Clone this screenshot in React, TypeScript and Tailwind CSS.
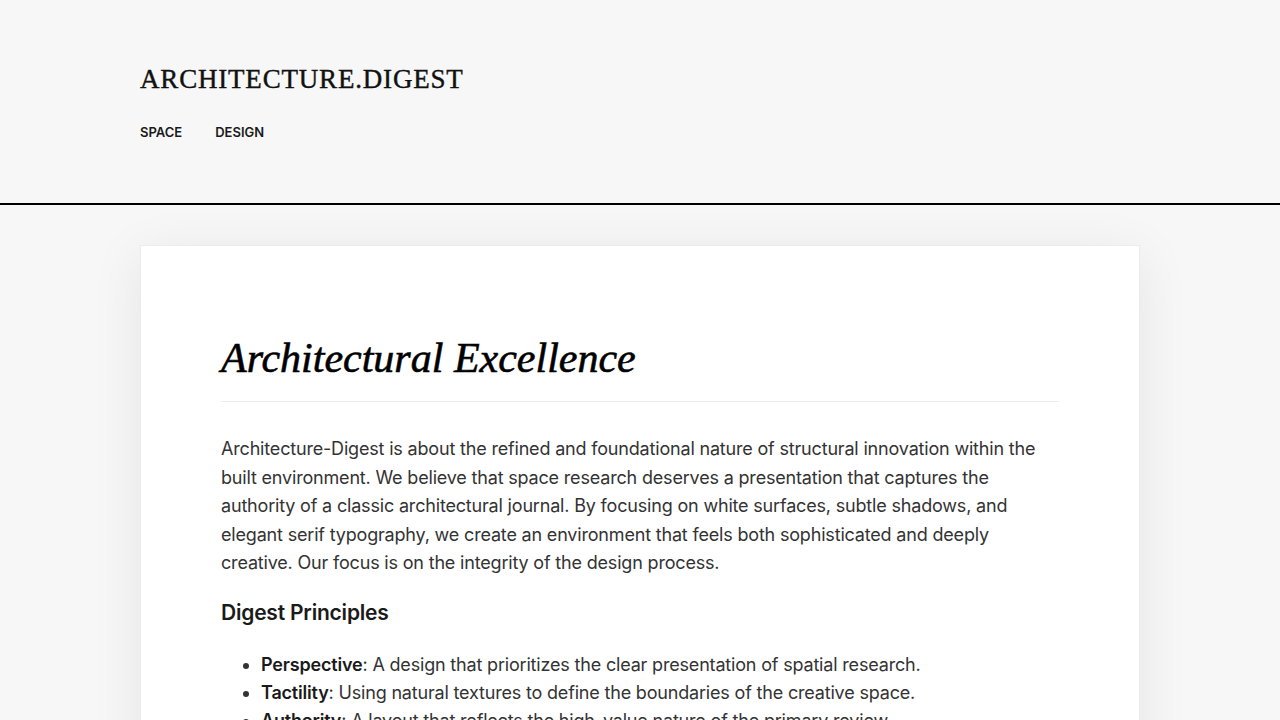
import React from 'react';

// ============================================
// Header
// ============================================

function SiteHeader() {
  const links = ['Space', 'Design'];
  return (
    <header className="bg-[#f7f7f7] border-b-2 border-black">
      <div className="max-w-[1000px] mx-auto pt-[62px] pb-[62px]">
        <div className="text-[27px] leading-[34px] tracking-[0.03em] text-[#111] font-['Liberation_Serif',serif] [-webkit-text-stroke:0.4px_#111]">
          ARCHITECTURE.DIGEST
        </div>
        <nav className="flex items-center gap-[33px] mt-[27px]">
          {links.map((l) => (
            <a key={l} href="#" className="text-[13px] leading-[18px] font-semibold uppercase text-[#1a1a1a]">
              {l}
            </a>
          ))}
        </nav>
      </div>
    </header>
  );
}

// ============================================
// Article
// ============================================

const principles = [
  { term: 'Perspective', text: 'A design that prioritizes the clear presentation of spatial research.' },
  { term: 'Tactility', text: 'Using natural textures to define the boundaries of the creative space.' },
  { term: 'Authority', text: 'A layout that reflects the high-value nature of the primary review.' },
];

export default function App() {
  return (
    <div className="min-h-screen bg-[#f7f7f7] font-['Inter',sans-serif]">
      <SiteHeader />

      <main className="max-w-[1000px] mx-auto pt-10 pb-16">
        <article className="bg-white border border-[#ececec] shadow-[0_10px_50px_rgba(0,0,0,0.08)] px-20 pt-[88px] pb-20">
          <h1 className="text-[42px] leading-[48px] italic text-black font-['Liberation_Serif',serif] [-webkit-text-stroke:0.6px_#000] pb-[19px] border-b border-[#ebebeb]">
            Architectural Excellence
          </h1>

          <p className="mt-[33px] text-[18px] leading-[28.6px] text-[#333] tracking-[-0.01em]">
            Architecture-Digest is about the refined and foundational nature of structural innovation within the
            built environment. We believe that space research deserves a presentation that captures the authority of
            a classic architectural journal. By focusing on white surfaces, subtle shadows, and elegant serif
            typography, we create an environment that feels both sophisticated and deeply creative. Our focus is on
            the integrity of the design process.
          </p>

          <h2 className="mt-[19px] text-[21px] leading-[32px] font-semibold text-[#1a1a1a] tracking-[-0.01em]">
            Digest Principles
          </h2>

          <ul className="mt-[22px] pl-10 list-disc text-[18px] leading-[28px] text-[#333] tracking-[-0.01em]">
            {principles.map((p) => (
              <li key={p.term}>
                <strong className="font-semibold text-[#1a1a1a]">{p.term}</strong>: {p.text}
              </li>
            ))}
          </ul>
        </article>
      </main>
    </div>
  );
}
